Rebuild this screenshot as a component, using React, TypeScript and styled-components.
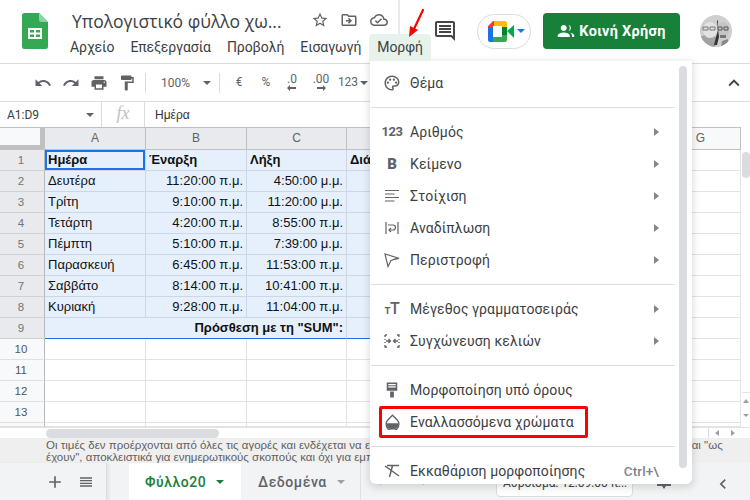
import styled, { createGlobalStyle } from 'styled-components';

const GlobalStyle = createGlobalStyle`
  html, body { margin: 0; padding: 0; background: #fff; }
  * { box-sizing: border-box; }
`;

const Page = styled.div`
  position: relative;
  width: 750px;
  height: 500px;
  overflow: hidden;
  display: flex;
  flex-direction: column;
  background: #fff;
  font-family: Roboto, "Noto Sans", sans-serif;
  color: #3c4043;
`;

/* header */
const Header = styled.header`
  height: 63px;
  flex: none;
  display: flex;
  align-items: flex-start;
`;

const LogoSlot = styled.div`
  width: 62px;
  flex: none;
  padding: 13px 0 0 22px;
`;

const DocColumn = styled.div`
  width: 338px;
  flex: none;
  display: flex;
  flex-direction: column;
`;

const TitleRow = styled.div`
  height: 34px;
  display: flex;
  align-items: center;
  padding: 0 0 0 10px;
`;

const DocTitle = styled.span`
  width: 238px;
  font-family: "Open Sans", Roboto, sans-serif;
  font-size: 17.5px;
  line-height: 24px;
  color: #3c4043;
  white-space: nowrap;
  margin-top: 8px;
`;

const TitleIcon = styled.span<{ $w: number }>`
  width: ${({ $w }) => $w}px;
  display: flex;
  justify-content: center;
  margin-top: 6px;
  color: #5f6368;
`;

const MenuBar = styled.nav`
  display: flex;
  height: 27px;
`;

const BarItem = styled.span<{ $open?: boolean }>`
  padding: 0 8px;
  height: 27px;
  line-height: 26px;
  font-size: 14px;
  letter-spacing: -0.08px;
  white-space: nowrap;
  color: #3c4043;
  border-radius: 4px 4px 0 0;
  background: ${({ $open }) => ($open ? '#e6f2ea' : 'transparent')};
  position: relative;
  z-index: ${({ $open }) => ($open ? 3 : 0)};
`;

const HeaderRight = styled.div`
  flex: 1;
  display: flex;
  align-items: center;
  padding: 13px 0 0 31px;
`;

const CommentSlot = styled.span`
  width: 28px;
  flex: none;
  display: flex;
  justify-content: center;
  color: #444746;
`;

const MeetPill = styled.span`
  width: 54px;
  height: 35px;
  flex: none;
  margin-left: 18px;
  border: 1px solid #dadce0;
  border-radius: 18px;
  display: flex;
  align-items: center;
  padding-left: 10px;
  gap: 3px;
`;

const ShareButton = styled.span`
  width: 137px;
  height: 36px;
  flex: none;
  margin-left: 12px;
  border-radius: 4px;
  background: #188038;
  color: #fff;
  display: flex;
  align-items: center;
  justify-content: center;
  gap: 4px;
  font-size: 14.5px;
  font-weight: 700;
  letter-spacing: 0.3px;
`;

const AvatarSlot = styled.span`
  width: 32px;
  height: 32px;
  flex: none;
  margin-left: 20px;
  border-radius: 50%;
  overflow: hidden;
`;

const PasteEdge = styled.span`
  position: absolute;
  left: 398px;
  top: 0;
  width: 2px;
  height: 34px;
  background: #e8eaed;
`;

const RedArrow = styled.svg`
  position: absolute;
  left: 404px;
  top: 6px;
  z-index: 5;
`;

/* toolbar */
const Toolbar = styled.div`
  height: 39px;
  flex: none;
  display: flex;
  align-items: center;
  padding-left: 29px;
  border-top: 1px solid #dadce0;
  border-bottom: 1px solid #dadce0;
  color: #5f6368;
`;

const ToolButton = styled.span<{ $w?: number }>`
  width: ${({ $w }) => $w ?? 28}px;
  flex: none;
  display: flex;
  flex-direction: column;
  align-items: center;
  justify-content: center;
  font-size: 12px;
  line-height: 11px;
  white-space: nowrap;
`;

const ToolSep = styled.span`
  width: 1px;
  height: 20px;
  flex: none;
  margin: 0 4px;
  background: #dadce0;
`;

const Caret = styled.span<{ $color?: string; $size?: number }>`
  display: inline-block;
  flex: none;
  width: 0;
  height: 0;
  border-left: ${({ $size }) => $size ?? 4}px solid transparent;
  border-right: ${({ $size }) => $size ?? 4}px solid transparent;
  border-top: ${({ $size }) => $size ?? 4}px solid ${({ $color }) => $color ?? '#5f6368'};
`;

const ZoomBox = styled.span`
  width: 65px;
  flex: none;
  display: flex;
  align-items: center;
  justify-content: space-between;
  padding: 0 4px 0 11px;
  font-size: 12px;
`;

const CollapseSlot = styled.span`
  margin-left: auto;
  padding-right: 5px;
  display: flex;
  color: #444;
`;

/* formula bar */
const FormulaBar = styled.div`
  height: 25px;
  flex: none;
  display: flex;
  align-items: center;
  color: #3c4043;
`;

const NameBox = styled.span`
  width: 102px;
  height: 100%;
  flex: none;
  display: flex;
  align-items: center;
  justify-content: space-between;
  padding: 0 7px 0 7px;
  font-size: 12px;
  border-right: 1px solid #dadce0;
`;

const FxBox = styled.span`
  width: 43px;
  height: 100%;
  flex: none;
  text-align: center;
  font-family: "Liberation Serif", serif;
  font-style: italic;
  font-size: 18px;
  line-height: 23px;
  color: #bdc1c6;
  border-right: 1px solid #dadce0;
`;

const FormulaText = styled.span`
  padding-left: 10px;
  font-family: "Liberation Sans", Arial, sans-serif;
  font-size: 12px;
  color: #333;
`;

/* grid */
const SheetWrap = styled.div`
  flex: none;
  height: 300px;
  display: flex;
`;

const Sheet = styled.div`
  width: 741px;
  height: 300px;
  flex: none;
  overflow: hidden;
  display: grid;
  grid-template-columns: 45px 101px 101px 100px 100px 100px 114px 80px;
  grid-template-rows: 23px repeat(13, 21px) 4px;
  font-family: "Liberation Sans", Arial, sans-serif;
  font-size: 13px;
  color: #111;
`;

const Corner = styled.div`
  background: #f8f9fa;
  border-top: 1px solid #c0c0c0;
  border-right: 5px solid #c0c0c0;
  border-bottom: 5px solid #c0c0c0;
`;

const ColHead = styled.div<{ $on?: boolean }>`
  background: ${({ $on }) => ($on ? '#e8eaed' : '#f8f9fa')};
  border-top: 1px solid #c0c0c0;
  border-right: 1px solid #c0c0c0;
  border-bottom: 1px solid #c0c0c0;
  text-align: center;
  font-size: 12px;
  line-height: 21px;
  color: #5f6368;
`;

const RowHead = styled.div<{ $on?: boolean }>`
  background: ${({ $on }) => ($on ? '#e8eaed' : '#f8f9fa')};
  border-right: 1px solid #b8b8b8;
  border-bottom: 1px solid ${({ $on }) => ($on ? '#d0d0d0' : '#e0e0e0')};
  text-align: center;
  font-size: 11.5px;
  line-height: 20px;
  color: ${({ $on }) => ($on ? '#70757a' : '#555')};
  padding-right: 2px;
`;

const Cell = styled.div<{ $sel?: boolean; $bold?: boolean; $right?: boolean; $active?: boolean; $span?: number; $last?: boolean }>`
  ${({ $span }) => ($span ? `grid-column: span ${$span};` : '')}
  background: ${({ $sel }) => ($sel ? '#e6f0fc' : '#fff')};
  border-right: 1px solid ${({ $sel }) => ($sel ? '#cdd6e4' : '#e2e3e3')};
  border-bottom: ${({ $last, $sel }) => ($last ? '1px solid #1a73e8' : `1px solid ${$sel ? '#cdd6e4' : '#e2e3e3'}`)};
  font-weight: ${({ $bold }) => ($bold ? 700 : 400)};
  text-align: ${({ $right }) => ($right ? 'right' : 'left')};
  line-height: 20px;
  padding: 0 3px;
  white-space: nowrap;
  overflow: hidden;
  box-shadow: ${({ $active }) => ($active ? 'inset 0 0 0 2px #1a73e8' : 'none')};
`;

const VScroll = styled.div`
  width: 9px;
  flex: none;
  height: 300px;
  display: flex;
  flex-direction: column;
  background: #fff;
  padding: 25px 0 0 1px;
`;

const VThumb = styled.span`
  height: 26px;
  flex: none;
  background: #dadce0;
  border-radius: 4px;
`;

const VArrows = styled.span`
  margin-top: auto;
  height: 30px;
  flex: none;
  display: flex;
  flex-direction: column;
  align-items: center;
  justify-content: space-around;
  border-top: 1px solid #e2e3e3;
  margin-bottom: 5px;
`;

const UpTip = styled.span`
  width: 0;
  height: 0;
  border-left: 3px solid transparent;
  border-right: 3px solid transparent;
  border-bottom: 4px solid #9aa0a6;
`;

const HScroll = styled.div`
  height: 11px;
  flex: none;
  display: flex;
  align-items: flex-end;
  padding-left: 46px;
  background: #fff;
  border-top: 1px solid #e2e3e3;
`;

const HThumb = styled.span`
  width: 173px;
  height: 9px;
  background: #dadce0;
  border-radius: 5px;
`;

const HArrows = styled.span`
  margin-left: auto;
  margin-right: 9px;
  width: 33px;
  height: 10px;
  display: flex;
  align-items: center;
  justify-content: space-around;
  border-left: 1px solid #dadce0;
`;

const SideTip = styled.span<{ $dir: 'l' | 'r' }>`
  width: 0;
  height: 0;
  border-top: 3px solid transparent;
  border-bottom: 3px solid transparent;
  ${({ $dir }) => ($dir === 'l' ? 'border-right: 4px solid #9aa0a6;' : 'border-left: 4px solid #9aa0a6;')}
`;

const Notice = styled.div`
  height: 25px;
  flex: none;
  overflow: hidden;
  background: #efefef;
  padding: 1px 0 0 46px;
  font-family: "Liberation Sans", Arial, sans-serif;
  font-size: 11.5px;
  line-height: 12px;
  color: #5f5f5f;
  white-space: nowrap;
`;

/* tab strip */
const TabBar = styled.div`
  height: 37px;
  flex: none;
  display: flex;
  background: #f1f3f4;
  color: #5f6368;
`;

const TabTools = styled.div`
  width: 107px;
  flex: none;
  display: flex;
  align-items: center;
  padding-left: 45px;
  gap: 13px;
  border-right: 1px solid #dcdcdc;
  box-shadow: 2px 0 2px #e4e4e4;
`;

const Tab = styled.div<{ $active?: boolean; $w: number }>`
  width: ${({ $w }) => $w}px;
  flex: none;
  display: flex;
  align-items: center;
  gap: 10px;
  padding-left: ${({ $active }) => ($active ? 16 : 17)}px;
  background: ${({ $active }) => ($active ? '#fff' : 'transparent')};
  color: ${({ $active }) => ($active ? '#188038' : '#5f6368')};
  font-size: 14px;
  font-weight: 500;
  letter-spacing: 0.55px;
  white-space: nowrap;
  border-right: ${({ $active }) => ($active ? '0' : '1px solid #e0e0e0')};
`;

const TabSpacer = styled.span`
  width: 22px;
  flex: none;
`;

const TabNav = styled.span`
  width: 50px;
  flex: none;
  margin-left: 16px;
  display: flex;
  align-items: center;
  justify-content: space-between;
`;

const ExploreBox = styled.div`
  width: 137px;
  height: 27px;
  flex: none;
  margin: 7px 0 0 69px;
  background: #fff;
  border: 1px solid #dadce0;
  border-radius: 0 0 4px 4px;
  font-size: 12px;
  line-height: 25px;
  color: #3c4043;
  padding: 0 6px;
  white-space: nowrap;
  overflow: hidden;
`;

const ExploreIcon = styled.svg`
  flex: none;
  margin: 13px 0 0 24px;
`;

const CollapseLeft = styled.span`
  flex: none;
  margin: 11px 0 0 42px;
  color: #5f6368;
`;

/* format menu */
const FormatMenu = styled.div`
  position: absolute;
  left: 370px;
  top: 61px;
  width: 322px;
  height: 423px;
  z-index: 2;
  overflow: hidden;
  background: #fff;
  border-radius: 0 0 6px 6px;
  box-shadow: 0 2px 6px 2px rgba(60, 64, 67, 0.15);
  padding: 6px 0 0;
`;

const MenuThumb = styled.span`
  position: absolute;
  left: 309px;
  top: 5px;
  width: 8px;
  height: 402px;
  border-radius: 4px;
  background: #dadce0;
`;

const MenuRow = styled.div`
  position: relative;
  width: 305px;
  height: 32px;
  display: flex;
  align-items: center;
  padding-right: 16px;
  font-size: 14px;
  letter-spacing: 0.1px;
  color: #3c4043;
`;

const MenuIcon = styled.span`
  width: 40px;
  flex: none;
  display: flex;
  align-items: baseline;
  justify-content: center;
  padding-left: 4px;
  color: #5f6368;
`;

const GlyphIcon = styled.span<{ $size: number; $weight?: number }>`
  font-size: ${({ $size }) => $size}px;
  font-weight: ${({ $weight }) => $weight ?? 700};
  line-height: 16px;
  letter-spacing: -0.4px;
  color: #5f6368;
  white-space: nowrap;
`;

const MenuLabel = styled.span`
  flex: 1;
  white-space: nowrap;
`;

const SubArrow = styled.span`
  width: 0;
  height: 0;
  flex: none;
  border-top: 4px solid transparent;
  border-bottom: 4px solid transparent;
  border-left: 5px solid #80868b;
`;

const Shortcut = styled.span`
  flex: none;
  margin-right: 0;
  font-size: 13.5px;
  font-weight: 500;
  color: #80868b;
`;

const MenuSep = styled.div`
  width: 304px;
  height: 1px;
  margin: 8px 0 8px 1px;
  background: #dadce0;
`;

const RedBox = styled.span`
  position: absolute;
  left: 9px;
  top: 0;
  width: 209px;
  height: 32px;
  border: 3px solid #f00;
  border-radius: 2px;
`;

type IconProps = { size?: number; d: string };

const Mat = ({ size = 18, d }: IconProps) => (
  <svg width={size} height={size} viewBox="0 0 24 24" fill="currentColor">
    <path d={d} />
  </svg>
);

const paths = {
  undo: 'M12.5 8c-2.65 0-5.05.99-6.9 2.6L2 7v9h9l-3.62-3.62c1.39-1.16 3.16-1.88 5.12-1.88 3.54 0 6.55 2.31 7.6 5.5l2.37-.78C21.08 11.03 17.15 8 12.5 8z',
  redo: 'M18.4 10.6C16.55 8.99 14.15 8 11.5 8c-4.65 0-8.58 3.03-9.96 7.22L3.9 16c1.05-3.19 4.05-5.5 7.6-5.5 1.95 0 3.73.72 5.12 1.88L13 16h9V7l-3.6 3.6z',
  print: 'M19 8H5c-1.66 0-3 1.34-3 3v6h4v4h12v-4h4v-6c0-1.66-1.34-3-3-3zm-3 11H8v-5h8v5zm3-7c-.55 0-1-.45-1-1s.45-1 1-1 1 .45 1 1-.45 1-1 1zm-1-9H6v4h12V3z',
  paint: 'M18 4V3c0-.55-.45-1-1-1H5c-.55 0-1 .45-1 1v4c0 .55.45 1 1 1h12c.55 0 1-.45 1-1V6h1v4H9v11c0 .55.45 1 1 1h2c.55 0 1-.45 1-1v-9h8V4h-3z',
  star: 'M22 9.24l-7.19-.62L12 2 9.19 8.63 2 9.24l5.46 4.73L5.82 21 12 17.27 18.18 21l-1.63-7.03L22 9.24zM12 15.4l-3.76 2.27 1-4.28-3.32-2.88 4.38-.38L12 6.1l1.71 4.04 4.38.38-3.32 2.88 1 4.28L12 15.4z',
  move: 'M20 6h-8l-2-2H4c-1.1 0-2 .9-2 2v12c0 1.1.9 2 2 2h16c1.1 0 2-.9 2-2V8c0-1.1-.9-2-2-2zm0 12H4V6h5.17l2 2H20v10zm-8.01-9l-1.41 1.41L12.16 12H8v2h4.16l-1.59 1.59L11.99 17 16 13.01 11.99 9z',
  cloud: 'M19.35 10.04C18.67 6.59 15.64 4 12 4 9.11 4 6.6 5.64 5.35 8.04 2.34 8.36 0 10.91 0 14c0 3.31 2.69 6 6 6h13c2.76 0 5-2.24 5-5 0-2.64-2.05-4.78-4.65-4.96zM19 18H6c-2.21 0-4-1.79-4-4 0-2.05 1.53-3.76 3.56-3.97l1.07-.11.5-.95C8.08 7.14 9.94 6 12 6c2.62 0 4.88 1.86 5.39 4.43l.3 1.5 1.53.11c1.56.1 2.78 1.41 2.78 2.96 0 1.65-1.35 3-3 3zm-9-3.82l-2.09-2.09L6.5 13.5 10 17l6.01-6.01-1.41-1.41z',
  comment: 'M21.99 4c0-1.1-.89-2-1.99-2H4c-1.1 0-2 .9-2 2v12c0 1.1.9 2 2 2h14l4 4-.01-18zM20 4v13.17L18.83 16H4V4h16zM6 12h12v2H6zm0-3h12v2H6zm0-3h12v2H6z',
  people: 'M9 12c2.21 0 4-1.79 4-4s-1.79-4-4-4-4 1.79-4 4 1.79 4 4 4zm0 2c-2.67 0-8 1.34-8 4v2h16v-2c0-2.66-5.33-4-8-4zm6.5-2c1.8-.3 3-1.9 3-4s-1.2-3.7-3-4c1 1 1.5 2.5 1.5 4s-.5 3-1.5 4zm1.9 2.3c1.6.9 2.6 2.1 2.6 3.7v2h3v-2c0-2.1-2.9-3.4-5.6-3.7z',
  up: 'M7.41 15.41L12 10.83l4.59 4.58L18 14l-6-6-6 6z',
  left: 'M15.41 7.41L14 6l-6 6 6 6 1.41-1.41L10.83 12z',
  plus: 'M19 13h-6v6h-2v-6H5v-2h6V5h2v6h6v2z',
  list: 'M3 5h18v2H3zm0 4h18v2H3zm0 4h18v2H3zm0 4h18v2H3z',
  brush: 'M5 2h14v11H5zm2 2v1.500h10V4zm0 3v1.500h10V7zm2.500 7h5v8h-5z',
};

const SheetsLogo = () => (
  <svg width="26" height="36" viewBox="0 0 26 36">
    <path d="M2.5 0H17l9 9v24.5a2.5 2.5 0 0 1-2.5 2.5h-21A2.5 2.5 0 0 1 0 33.5v-31A2.5 2.5 0 0 1 2.5 0z" fill="#34a853" />
    <path d="M17 0l9 9h-6.5A2.5 2.5 0 0 1 17 6.500z" fill="#8ed1a5" />
    <path d="M6 15h14v11H6z M8 17v2.500h4V17z M14 17v2.500h4V17z M8 21.500V24h4v-2.500z M14 21.500V24h4v-2.500z" fill="#fff" fillRule="evenodd" />
  </svg>
);

const MeetLogo = () => (
  <svg width="26" height="21" viewBox="0 0 26 21">
    <path d="M5 0h12v5H5v5H0V5z" fill="#ea4335" />
    <path d="M6 0h11a2 2 0 0 1 2 2v4h-5V5H6z" fill="#fbbc04" />
    <path d="M0 6h5v9H0z" fill="#1a73e8" />
    <path d="M0 15h5v6H2a2 2 0 0 1-2-2z" fill="#1a73e8" />
    <path d="M5 16h9v-2h5v5a2 2 0 0 1-2 2H5z" fill="#34a853" />
    <path d="M14 6h5v8h-5z" fill="#00832d" />
    <path d="M19 10l7-6v13z" fill="#00ac47" />
  </svg>
);

const AvatarPhoto = () => (
  <svg width="32" height="32" viewBox="0 0 32 32">
    <rect width="32" height="32" fill="#cfcfcf" />
    <path d="M0 22q8-5 16 0l-1 10H0z" fill="#a2a2a2" />
    <ellipse cx="10" cy="15" rx="7" ry="8" fill="#e2e2e2" />
    <path d="M3 12h5v3H3zM10 12h5v3h-5z" fill="none" stroke="#777" strokeWidth="1" />
    <ellipse cx="23" cy="15" rx="6" ry="8" fill="#c4c4c4" />
    <path d="M18 12h4v3h-4zM24 12h4v3h-4z" fill="none" stroke="#555" strokeWidth="1" />
    <path d="M20 20h6v3h-6z" fill="#777" />
    <path d="M17 6l1-1 0 10-2 7-2 8h3l2-8z" fill="#333" />
    <path d="M22 26l6-2 2 8h-9z" fill="#888" />
  </svg>
);

const ThemeIcon = () => (
  <svg width="18" height="18" viewBox="0 0 24 24" fill="currentColor">
    <path d="M12 2C6.49 2 2 6.49 2 12s4.49 10 10 10c1.38 0 2.5-1.12 2.5-2.5 0-.61-.23-1.2-.64-1.67-.08-.1-.13-.21-.13-.33 0-.28.22-.5.5-.5H16c3.31 0 6-2.69 6-6 0-4.96-4.49-9-10-9zm4 13h-1.770c-1.380 0-2.500 1.120-2.500 2.500 0 .610.230 1.200.640 1.670.080.100.130.210.130.330 0 .280-.220.500-.500.500C7.080 20 4 16.420 4 12s3.580-8 8-8 8 3.140 8 7c0 2.210-1.790 4-4 4z" />
    <circle cx="6.500" cy="11.500" r="1.500" />
    <circle cx="9.500" cy="7.500" r="1.500" />
    <circle cx="14.500" cy="7.500" r="1.500" />
    <circle cx="17.500" cy="11.500" r="1.500" />
  </svg>
);

const AlignIcon = () => (
  <svg width="16" height="16" viewBox="0 0 16 16" fill="none" stroke="currentColor" strokeWidth="1.100">
    <path d="M1 2.500h14M1 6h9.500M1 9.500h14M1 13h9.500" />
  </svg>
);

const WrapIcon = () => (
  <svg width="16" height="16" viewBox="0 0 16 16" fill="none" stroke="currentColor" strokeWidth="1.200">
    <path d="M2 2v12M14 2v12" />
    <path d="M4 5h5a2.500 2.500 0 0 1 0 5H5" />
    <path d="M7 8l-2 2 2 2" />
  </svg>
);

const RotateIcon = () => (
  <svg width="18" height="18" viewBox="0 0 18 18" fill="none" stroke="currentColor" strokeWidth="1.200">
    <path d="M2 3l13 4-7 2.500-3 6z" />
    <path d="M11 8.500l5-1" />
  </svg>
);

const MergeIcon = () => (
  <svg width="16" height="16" viewBox="0 0 16 16" fill="none" stroke="currentColor" strokeWidth="1.300">
    <path d="M1 2v2M1 6v1M1 9v1M1 12v2h2M3 2H1M13 2h2v2M15 6v1M15 9v1M15 12v2h-2" />
    <path d="M2 8h4M4.500 6L6.500 8 4.500 10M14 8h-4M11.500 6L9.500 8l2 2" />
  </svg>
);

const DropIcon = () => (
  <svg width="15" height="16" viewBox="0 0 15 16">
    <path d="M7.500 1.200L3 5.700a6.400 6.400 0 1 0 9 0z" fill="none" stroke="#5f6368" strokeWidth="1.300" />
    <path d="M1.200 9.200h12.600a6.300 6.300 0 0 1-12.600 0z" fill="#5f6368" />
  </svg>
);

const ClearIcon = () => (
  <svg width="18" height="16" viewBox="0 0 18 16" fill="none" stroke="currentColor" strokeWidth="1.500">
    <path d="M4 2.500h12M9.500 2.500L6.500 14" />
    <path d="M2 3l14 10" />
  </svg>
);

const DecimalArrow = ({ dir }: { dir: 'l' | 'r' }) => (
  <svg width="10" height="6" viewBox="0 0 10 6" fill="#5f6368">
    {dir === 'l' ? <path d="M0 3l3-3v2h6v2H3v2z" /> : <path d="M10 3L7 0v2H1v2h6v2z" />}
  </svg>
);

const rows = [
  ['Δευτέρα', '11:20:00 π.μ.', '4:50:00 μ.μ.'],
  ['Τρίτη', '9:10:00 π.μ.', '11:20:00 μ.μ.'],
  ['Τετάρτη', '4:20:00 π.μ.', '8:55:00 π.μ.'],
  ['Πέμπτη', '5:10:00 π.μ.', '7:39:00 μ.μ.'],
  ['Παρασκευή', '6:45:00 π.μ.', '11:53:00 π.μ.'],
  ['Σαββάτο', '8:14:00 π.μ.', '10:41:00 π.μ.'],
  ['Κυριακή', '9:28:00 π.μ.', '11:04:00 π.μ.'],
];

const blanks = [10, 11, 12, 13, 14];
const tail = [0, 1, 2, 3, 4, 5, 6];

export default function App() {
  return (
    <Page>
      <GlobalStyle />
      <Header>
        <LogoSlot>
          <SheetsLogo />
        </LogoSlot>
        <DocColumn>
          <TitleRow>
            <DocTitle>Υπολογιστικό φύλλο χω...</DocTitle>
            <TitleIcon $w={20}><Mat d={paths.star} size={18} /></TitleIcon>
            <TitleIcon $w={38}><Mat d={paths.move} size={18} /></TitleIcon>
            <TitleIcon $w={22}><Mat d={paths.cloud} size={18} /></TitleIcon>
          </TitleRow>
          <MenuBar>
            <BarItem>Αρχείο</BarItem>
            <BarItem>Επεξεργασία</BarItem>
            <BarItem>Προβολή</BarItem>
            <BarItem>Εισαγωγή</BarItem>
            <BarItem $open>Μορφή</BarItem>
          </MenuBar>
        </DocColumn>
        <HeaderRight>
          <CommentSlot><Mat d={paths.comment} size={24} /></CommentSlot>
          <MeetPill>
            <MeetLogo />
            <Caret $color="#1a73e8" />
          </MeetPill>
          <ShareButton>
            <Mat d={paths.people} size={18} />
            Κοινή Χρήση
          </ShareButton>
          <AvatarSlot><AvatarPhoto /></AvatarSlot>
        </HeaderRight>
      </Header>
      <PasteEdge />
      <RedArrow width="24" height="34" viewBox="0 0 24 34">
        <path d="M19 4L9.500 24" stroke="#f00" strokeWidth="2.200" strokeLinecap="round" />
        <path d="M5 31l1-11 8 4z" fill="#f00" />
      </RedArrow>

      <Toolbar>
        <ToolButton><Mat d={paths.undo} /></ToolButton>
        <ToolButton><Mat d={paths.redo} /></ToolButton>
        <ToolButton><Mat d={paths.print} /></ToolButton>
        <ToolButton><Mat d={paths.paint} /></ToolButton>
        <ToolSep />
        <ZoomBox>100%<Caret /></ZoomBox>
        <ToolSep />
        <ToolButton $w={30}>€</ToolButton>
        <ToolButton $w={24}>%</ToolButton>
        <ToolButton $w={28}>.0<DecimalArrow dir="l" /></ToolButton>
        <ToolButton $w={30}>.00<DecimalArrow dir="r" /></ToolButton>
        <ToolButton $w={24}>123</ToolButton>
        <Caret />
        <CollapseSlot><Mat d={paths.up} size={22} /></CollapseSlot>
      </Toolbar>

      <FormulaBar>
        <NameBox>A1:D9<Caret /></NameBox>
        <FxBox>fx</FxBox>
        <FormulaText>Ημέρα</FormulaText>
      </FormulaBar>

      <SheetWrap>
        <Sheet>
          <Corner />
          <ColHead $on>A</ColHead>
          <ColHead $on>B</ColHead>
          <ColHead $on>C</ColHead>
          <ColHead $on>D</ColHead>
          <ColHead>E</ColHead>
          <ColHead>F</ColHead>
          <ColHead>G</ColHead>

          <RowHead $on>1</RowHead>
          <Cell $sel $bold $active>Ημέρα</Cell>
          <Cell $sel $bold>Έναρξη</Cell>
          <Cell $sel $bold>Λήξη</Cell>
          <Cell $sel $bold>Διάρκεια</Cell>
          <Cell />
          <Cell />
          <Cell />

          {rows.map((r, i) => [
            <RowHead $on key={`h${i}`}>{i + 2}</RowHead>,
            <Cell $sel key={`a${i}`}>{r[0]}</Cell>,
            <Cell $sel $right key={`b${i}`}>{r[1]}</Cell>,
            <Cell $sel $right key={`c${i}`}>{r[2]}</Cell>,
            <Cell $sel key={`d${i}`} />,
            <Cell key={`e${i}`} />,
            <Cell key={`f${i}`} />,
            <Cell key={`g${i}`} />,
          ])}

          <RowHead $on>9</RowHead>
          <Cell $sel $bold $right $span={3} $last>Πρόσθεση με τη "SUM":</Cell>
          <Cell $sel $last />
          <Cell />
          <Cell />
          <Cell />

          {blanks.map((n) => [
            <RowHead key={`r${n}`}>{n === 14 ? '' : n}</RowHead>,
            ...tail.map((c) => <Cell key={`${n}-${c}`} />),
          ])}
        </Sheet>
        <VScroll>
          <VThumb />
          <VArrows>
            <UpTip />
            <Caret $color="#9aa0a6" $size={3} />
          </VArrows>
        </VScroll>
      </SheetWrap>

      <HScroll>
        <HThumb />
        <HArrows>
          <SideTip $dir="l" />
          <SideTip $dir="r" />
        </HArrows>
      </HScroll>

      <Notice>
        Οι τιμές δεν προέρχονται από όλες τις αγορές και ενδέχεται να εμφανίζονται με καθυστέρηση έως και 20 λεπτά. Αυτές παρέχονται "ως
        <br />
        έχουν", αποκλειστικά για ενημερωτικούς σκοπούς και όχι για εμπορικούς σκοπούς.
      </Notice>

      <TabBar>
        <TabTools>
          <Mat d={paths.plus} size={20} />
          <Mat d={paths.list} size={16} />
        </TabTools>
        <TabSpacer />
        <Tab $active $w={112}>Φύλλο20<Caret $color="#188038" /></Tab>
        <Tab $w={120}>Δεδομένα<Caret $color="#9aa0a6" /></Tab>
        <TabNav>
          <SideTip $dir="l" />
          <SideTip $dir="r" />
        </TabNav>
        <ExploreBox>Άθροισμα: 12:09:00 π...</ExploreBox>
        <ExploreIcon width="14" height="13" viewBox="0 0 14 13">
          <path d="M0 0h14v10H9l-2 3-2-3H0z" fill="#5f6368" />
        </ExploreIcon>
        <CollapseLeft><Mat d={paths.left} size={20} /></CollapseLeft>
      </TabBar>

      <FormatMenu>
        <MenuThumb />
        <MenuRow>
          <MenuIcon><ThemeIcon /></MenuIcon>
          <MenuLabel>Θέμα</MenuLabel>
        </MenuRow>
        <MenuSep />
        <MenuRow>
          <MenuIcon><GlyphIcon $size={13}>123</GlyphIcon></MenuIcon>
          <MenuLabel>Αριθμός</MenuLabel>
          <SubArrow />
        </MenuRow>
        <MenuRow>
          <MenuIcon><GlyphIcon $size={15} $weight={900}>B</GlyphIcon></MenuIcon>
          <MenuLabel>Κείμενο</MenuLabel>
          <SubArrow />
        </MenuRow>
        <MenuRow>
          <MenuIcon><AlignIcon /></MenuIcon>
          <MenuLabel>Στοίχιση</MenuLabel>
          <SubArrow />
        </MenuRow>
        <MenuRow>
          <MenuIcon><WrapIcon /></MenuIcon>
          <MenuLabel>Αναδίπλωση</MenuLabel>
          <SubArrow />
        </MenuRow>
        <MenuRow>
          <MenuIcon><RotateIcon /></MenuIcon>
          <MenuLabel>Περιστροφή</MenuLabel>
          <SubArrow />
        </MenuRow>
        <MenuSep />
        <MenuRow>
          <MenuIcon><GlyphIcon $size={12} $weight={500}>т</GlyphIcon><GlyphIcon $size={16} $weight={500}>T</GlyphIcon></MenuIcon>
          <MenuLabel>Μέγεθος γραμματοσειράς</MenuLabel>
          <SubArrow />
        </MenuRow>
        <MenuRow>
          <MenuIcon><MergeIcon /></MenuIcon>
          <MenuLabel>Συγχώνευση κελιών</MenuLabel>
          <SubArrow />
        </MenuRow>
        <MenuSep />
        <MenuRow>
          <MenuIcon><Mat d={paths.brush} size={18} /></MenuIcon>
          <MenuLabel>Μορφοποίηση υπό όρους</MenuLabel>
        </MenuRow>
        <MenuRow>
          <MenuIcon><DropIcon /></MenuIcon>
          <MenuLabel>Εναλλασσόμενα χρώματα</MenuLabel>
          <RedBox />
        </MenuRow>
        <MenuSep />
        <MenuRow>
          <MenuIcon><ClearIcon /></MenuIcon>
          <MenuLabel>Εκκαθάριση μορφοποίησης</MenuLabel>
          <Shortcut>Ctrl+\</Shortcut>
        </MenuRow>
      </FormatMenu>
    </Page>
  );
}
